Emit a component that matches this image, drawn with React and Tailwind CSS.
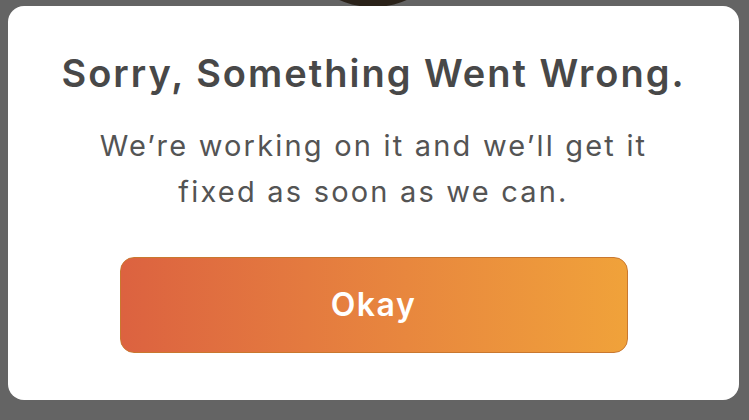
export default function App() {
  return (
    <div
      className="relative w-[749px] h-[420px] overflow-hidden bg-[#646464]"
      style={{ fontFamily: "Inter, 'Noto Sans', sans-serif" }}
    >
      <div className="absolute left-[318px] top-[-60px] w-[110px] h-[67px] rounded-[50%] bg-[#2a2219]" />
      <div className="relative ml-[8px] mt-[6px] w-[731px] h-[394px] rounded-[16px] bg-white flex flex-col items-center">
        <h1 className="mt-[44px] text-[38px] leading-[46px] font-semibold text-[#484848] tracking-[2px] whitespace-nowrap">
          Sorry, Something Went Wrong.
        </h1>
        <p className="mt-[27px] text-[29px] leading-[46px] text-[#545454] text-center tracking-[2.2px] whitespace-nowrap">
          We’re working on it and we’ll get it
          <br />
          fixed as soon as we can.
        </p>
        <button className="mt-[42px] w-[508px] h-[96px] rounded-[14px] border border-[#c9782f] bg-gradient-to-r from-[#dc6240] to-[#f0a23a] text-white text-[32px] font-semibold tracking-[1.5px]">
          Okay
        </button>
      </div>
    </div>
  );
}
